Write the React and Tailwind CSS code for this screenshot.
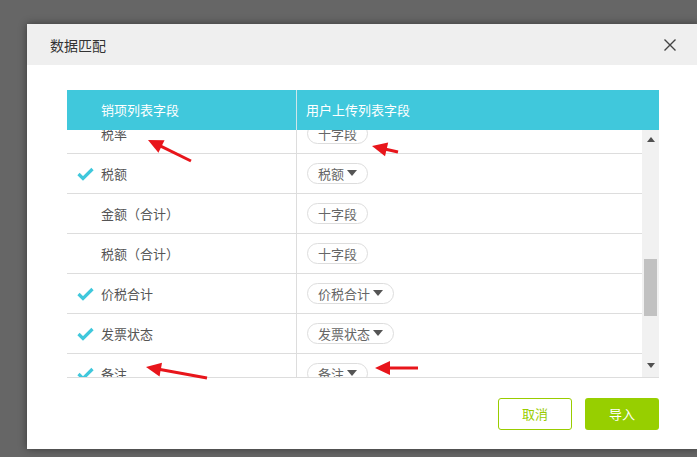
import React from "react";

const rows = [
  { label: "税率", checked: false, field: "十字段", drop: false },
  { label: "税额", checked: true, field: "税额", drop: true },
  { label: "金额（合计）", checked: false, field: "十字段", drop: false },
  { label: "税额（合计）", checked: false, field: "十字段", drop: false },
  { label: "价税合计", checked: true, field: "价税合计", drop: true },
  { label: "发票状态", checked: true, field: "发票状态", drop: true },
  { label: "备注", checked: true, field: "备注", drop: true },
];

// red annotation arrows: [tailX, tailY, tipX, tipY]
const arrows = [
  [191, 161, 148, 140],
  [398, 152, 372, 146],
  [207, 378, 146, 367],
  [418, 368, 375, 368],
];

function Arrow({ a }) {
  const [x1, y1, x2, y2] = a;
  const dx = x2 - x1;
  const dy = y2 - y1;
  const len = Math.hypot(dx, dy);
  const ux = dx / len;
  const uy = dy / len;
  const hl = 15;
  const hw = 7;
  const bx = x2 - ux * hl;
  const by = y2 - uy * hl;
  const pts = `${x2},${y2} ${bx - uy * hw},${by + ux * hw} ${bx + uy * hw},${by - ux * hw}`;
  return (
    <g>
      <line x1={x1} y1={y1} x2={bx + ux * 2} y2={by + uy * 2} stroke="#e8151b" strokeWidth="3" />
      <polygon points={pts} fill="#e8151b" />
    </g>
  );
}

function Check() {
  return (
    <svg width="17" height="14" viewBox="0 0 17 14">
      <path d="M1.5 7 L6 11.5 L15.5 2" fill="none" stroke="#40c8dc" strokeWidth="3.2" strokeLinejoin="miter" />
    </svg>
  );
}

export default function App() {
  return (
    <div
      className="relative w-[697px] h-[457px] overflow-hidden bg-[#666666] pt-[24px] pl-[27px]"
      style={{ fontFamily: '"Noto Sans CJK SC", "Noto Sans", sans-serif' }}
    >
      <div className="w-[672px] h-[425px] bg-white shadow-[0_0_8px_rgba(0,0,0,0.45)] flex flex-col">
        <div className="h-[41px] bg-[#efefef] flex items-center justify-between pl-[23px] pr-[22px] shrink-0">
          <span className="text-[14px] text-[#333] leading-none">数据匹配</span>
          <svg width="14" height="14" viewBox="0 0 14 14">
            <path d="M1.5 1.5 L12.5 12.5 M12.5 1.5 L1.5 12.5" stroke="#444" strokeWidth="1.4" />
          </svg>
        </div>

        <div className="px-[40px] pt-[25px]">
          <div className="h-[40px] bg-[#40c8dc] flex text-white text-[13px]">
            <div className="w-[230px] border-r border-[#cfe6ea] flex items-center pl-[34px]">销项列表字段</div>
            <div className="flex items-center pl-[9px]">用户上传列表字段</div>
          </div>

          <div className="h-[248px] flex border-b border-[#dddddd]">
            <div className="w-[575px] overflow-hidden">
              <div className="mt-[-16px]">
                {rows.map((r, i) => (
                  <div key={i} className="h-[40px] flex border-b border-[#dddddd] text-[13px] text-[#555]">
                    <div className="w-[230px] border-r border-[#dddddd] flex items-center pl-[10px]">
                      <span className="w-[17px] flex items-center">{r.checked && <Check />}</span>
                      <span className="ml-[7px]">{r.label}</span>
                    </div>
                    <div className="flex items-center pl-[10px]">
                      <span className="h-[21px] flex items-center gap-[3px] rounded-full border border-[#dddddd] px-[10px] text-[#666] leading-none">
                        {r.field}
                        {r.drop && (
                          <svg width="10" height="7" viewBox="0 0 10 7">
                            <path d="M0 0 L10 0 L5 6 Z" fill="#555" />
                          </svg>
                        )}
                      </span>
                    </div>
                  </div>
                ))}
              </div>
            </div>
            <div className="w-[17px] bg-[#f1f1f1] flex flex-col items-center">
              <svg className="mt-[7px]" width="8" height="5" viewBox="0 0 8 5">
                <path d="M0 5 L8 5 L4 0 Z" fill="#505050" />
              </svg>
              <div className="mt-[117px] w-[13px] h-[57px] bg-[#c1c1c1]" />
              <svg className="mt-[47px]" width="8" height="5" viewBox="0 0 8 5">
                <path d="M0 0 L8 0 L4 5 Z" fill="#505050" />
              </svg>
            </div>
          </div>

          <div className="flex justify-end gap-[13px] mt-[20px]">
            <button className="w-[74px] h-[32px] rounded-[3px] border border-[#99cc00] text-[#99cc00] text-[13px] bg-white">
              取消
            </button>
            <button className="w-[74px] h-[32px] rounded-[3px] bg-[#97cf00] text-white text-[13px]">
              导入
            </button>
          </div>
        </div>
      </div>

      <svg className="absolute inset-0 pointer-events-none" width="697" height="457">
        {arrows.map((a, i) => (
          <Arrow key={i} a={a} />
        ))}
      </svg>
    </div>
  );
}
